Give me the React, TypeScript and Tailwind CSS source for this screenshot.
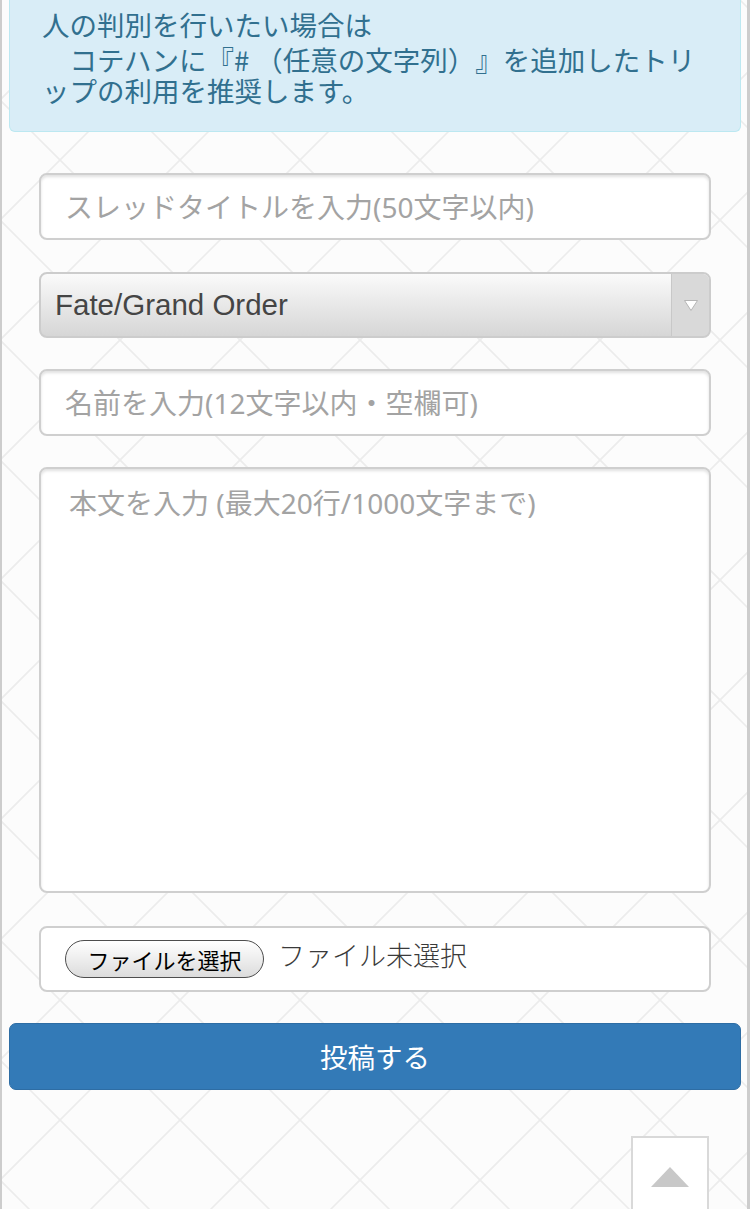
export default function App() {
  return (
    <div className="relative w-[750px] h-[1209px] overflow-hidden bg-[#fcfcfc] border-l-2 border-r-[3px] border-[#cdcdcd] font-['Noto_Sans','Noto_Sans_CJK_JP',sans-serif]">
      <svg className="absolute inset-0 w-full h-full" aria-hidden="true">
        <defs>
          <pattern id="lattice" x="-2" y="0" width="120" height="120" patternUnits="userSpaceOnUse">
            <g stroke="#ececec" strokeWidth="1.6" fill="none">
              <line x1="-10" y1="110" x2="110" y2="-10" />
              <line x1="90" y1="130" x2="130" y2="90" />
              <line x1="10" y1="-10" x2="130" y2="110" />
              <line x1="-10" y1="90" x2="30" y2="130" />
            </g>
          </pattern>
        </defs>
        <rect width="100%" height="100%" fill="url(#lattice)" />
      </svg>

      <div className="relative flex flex-col">
        {/* info alert */}
        <div className="ml-[7px] mr-[6px] h-[132px] bg-[#d9edf7] border border-t-0 border-[#bce8f1] rounded-b-[6px] pl-[32px] pt-[8px] text-[#31708f] text-[27.5px] font-['Noto_Sans_CJK_JP',sans-serif] whitespace-pre [text-spacing-trim:space-all] [font-feature-settings:'fwid'_0]">
          <div className="leading-[32px]">人の判別を行いたい場合は</div>
          <div className="mt-[4px] leading-[31px]">
            {"\u3000コテハンに『# （任意の文字列）』を追加したトリ"}
          </div>
          <div className="leading-[31px]">{"ップの利用を推奨します。"}</div>
        </div>

        {/* title input */}
        <div className="ml-[37px] mr-[36px] mt-[41px] h-[67px] bg-white border-2 border-[#cfcfcf] rounded-[8px] shadow-[inset_0_2px_3px_rgba(0,0,0,0.12)] flex items-center pl-[24px] text-[28px] text-[#a3a3a3]">
          スレッドタイトルを入力(50文字以内)
        </div>

        {/* select */}
        <div className="ml-[37px] mr-[36px] mt-[32px] h-[66px] border-2 border-[#cccccc] rounded-[8px] overflow-hidden flex bg-[linear-gradient(#fafafa,#d6d6d6)]">
          <div className="flex-1 flex items-center pl-[14px] text-[29.5px] text-[#454545] font-['Liberation_Sans',sans-serif]">
            Fate/Grand Order
          </div>
          <div className="w-[38px] border-l border-[#c8c8c8] bg-[#d9d9d9] flex items-center justify-center">
            <svg width="16" height="13" viewBox="0 0 16 13">
              <polygon points="1.5,1.5 14.5,1.5 8,11.5" fill="#ffffff" stroke="#b5b5b5" strokeWidth="1" />
            </svg>
          </div>
        </div>

        {/* name input */}
        <div className="ml-[37px] mr-[36px] mt-[31px] h-[67px] bg-white border-2 border-[#cfcfcf] rounded-[8px] shadow-[inset_0_2px_3px_rgba(0,0,0,0.12)] flex items-center pl-[24px] text-[28px] text-[#a3a3a3]">
          名前を入力(12文字以内・空欄可)
        </div>

        {/* textarea */}
        <div className="ml-[37px] mr-[36px] mt-[31px] h-[426px] bg-white border-2 border-[#cfcfcf] rounded-[8px] shadow-[inset_0_2px_3px_rgba(0,0,0,0.12)] pl-[28px] pt-[14px] leading-[40px] text-[28px] text-[#a3a3a3]">
          本文を入力 (最大20行/1000文字まで)
        </div>

        {/* file input */}
        <div className="ml-[37px] mr-[36px] mt-[33px] h-[66px] bg-white border-2 border-[#cfcfcf] rounded-[8px] flex items-center pl-[24px]">
          <button
            type="button"
            className="h-[38px] w-[199px] rounded-full border-[1.5px] border-[#4d4d4d] bg-[linear-gradient(#ffffff,#dcdcdc)] text-[22px] text-black leading-none flex items-center justify-center font-['Noto_Sans_CJK_JP',sans-serif]"
          >
            ファイルを選択
          </button>
          <span className="ml-[14px] -mt-[8px] text-[27px] text-[#3a3a3a] font-['Noto_Sans_CJK_JP',sans-serif] font-light">ファイル未選択</span>
        </div>

        {/* submit */}
        <button
          type="button"
          className="ml-[7px] mr-[6px] mt-[31px] h-[67px] rounded-[7px] bg-[#337ab7] border border-[#2e6da4] text-white text-[27.5px] flex items-center justify-center font-['Noto_Sans_CJK_JP',sans-serif]"
        >
          投稿する
        </button>

        {/* page top */}
        <div className="ml-auto mr-[38px] mt-[46px] w-[78px] h-[110px] bg-white border-2 border-[#d9d9d9] flex justify-center pt-[29px]">
          <svg width="38" height="20" viewBox="0 0 38 20">
            <polygon points="19,0 38,20 0,20" fill="#c8c8c8" />
          </svg>
        </div>
      </div>
    </div>
  );
}
